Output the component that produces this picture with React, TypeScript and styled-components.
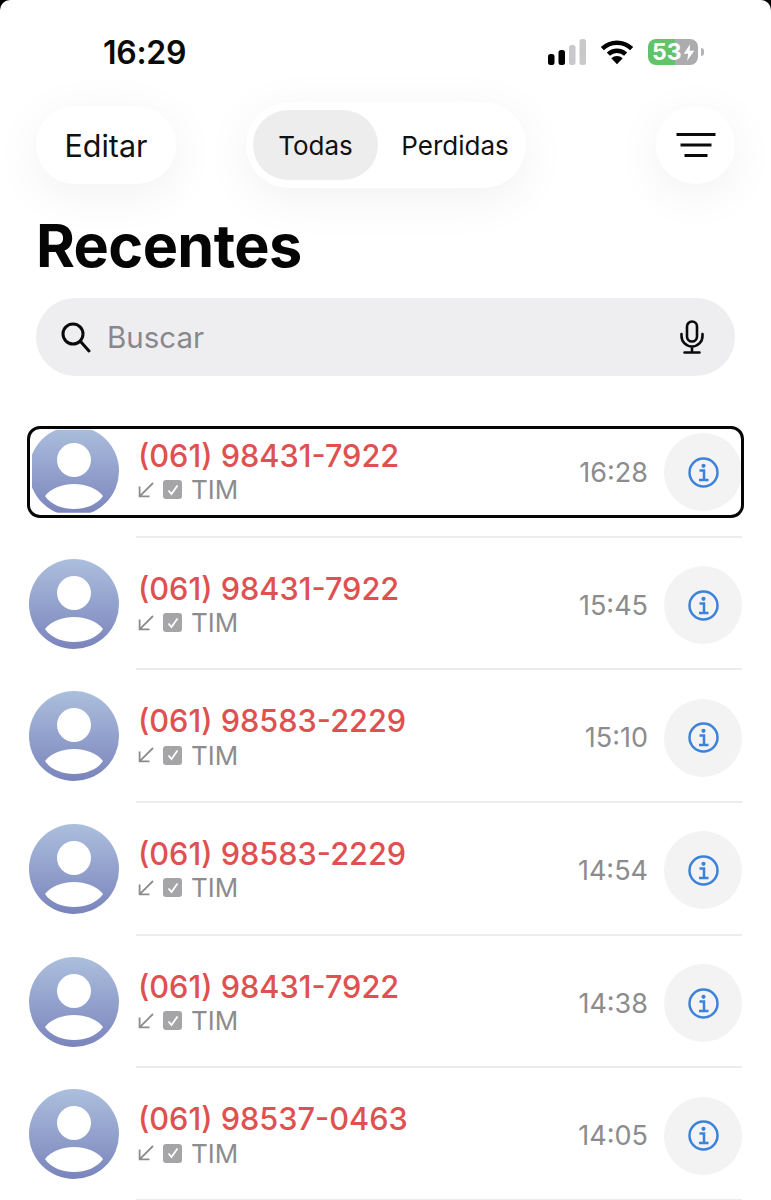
import React from "react";
import styled, { createGlobalStyle } from "styled-components";

const Global = createGlobalStyle`
  html, body { margin: 0; padding: 0; background: #000; }
  body { font-family: Inter, "Liberation Sans", sans-serif; -webkit-font-smoothing: antialiased; }
`;

const Screen = styled.div`
  width: 771px;
  height: 1200px;
  overflow: hidden;
  background: #fff;
  border-radius: 10px 10px 0 0;
`;

const StatusBar = styled.div`
  height: 102px;
  display: flex;
  align-items: flex-start;
  justify-content: space-between;
  padding: 34px 67px 0 103px;
  box-sizing: border-box;
`;

const Clock = styled.div`
  font-size: 32px;
  line-height: 37px;
  font-weight: 600;
  color: #0a0a0a;
  letter-spacing: -0.3px;
`;

const StatusIcons = styled.div`
  display: flex;
  align-items: flex-end;
  margin-top: 5px;
  height: 26px;
  gap: 14px;
`;

const Battery = styled.div`
  position: relative;
  width: 50px;
  height: 26px;
  margin-right: 6px;
  border-radius: 8px;
  background: linear-gradient(90deg, #62c368 0 54%, #acacae 54% 100%);
  color: #fff;
  font-size: 23px;
  line-height: 26px;
  font-weight: 700;
  padding-left: 4px;
  box-sizing: border-box;
  display: flex;
  align-items: center;
  gap: 1px;
  &::after {
    content: "";
    position: absolute;
    right: -6px;
    top: 9px;
    width: 3px;
    height: 8px;
    border-radius: 0 4px 4px 0;
    background: #b4b4b6;
  }
`;

const Toolbar = styled.div`
  display: flex;
  align-items: center;
  height: 86px;
  padding: 0 36px;
`;

const Pill = styled.div`
  width: 140px;
  height: 78px;
  border-radius: 39px;
  background: #fff;
  box-shadow: 0 10px 50px rgba(0, 0, 0, 0.06);
  display: flex;
  align-items: center;
  justify-content: center;
  font-size: 30.5px;
  font-weight: 400;
  color: #111;
`;

const Segment = styled.div`
  width: 280px;
  height: 86px;
  margin-left: 70px;
  box-sizing: border-box;
  padding: 8px 7px;
  border-radius: 43px;
  background: #fff;
  box-shadow: 0 10px 50px rgba(0, 0, 0, 0.06);
  display: flex;
  align-items: center;
`;

const SegmentItem = styled.div<{ $active?: boolean }>`
  width: ${(p) => (p.$active ? "125px" : "141px")};
  height: 70px;
  box-sizing: border-box;
  padding-left: ${(p) => (p.$active ? "0" : "13px")};
  border-radius: 35px;
  background: ${(p) => (p.$active ? "#ededed" : "transparent")};
  display: flex;
  align-items: center;
  justify-content: center;
  font-size: 26px;
  color: #111;
`;

const RoundButton = styled(Pill)`
  width: 79px;
  margin-left: auto;
`;

const Title = styled.h1`
  margin: 19px 0 0 36px;
  height: 78px;
  font-size: 59.3px;
  line-height: 78px;
  font-weight: 700;
  letter-spacing: -0.6px;
  color: #050505;
`;

const SearchBar = styled.div`
  margin: 13px 36px 0;
  height: 78px;
  border-radius: 39px;
  background: #eeeef0;
  display: flex;
  align-items: center;
  padding: 0 31px 0 24px;
  gap: 15px;
`;

const SearchText = styled.span`
  flex: 1;
  font-size: 29.5px;
  color: #88888c;
`;

const List = styled.div`
  margin-top: 29px;
`;

const Row = styled.div`
  position: relative;
  height: 132.7px;
  display: flex;
  align-items: stretch;
  padding: 0 29px;
  gap: 18px;
`;

const FocusRing = styled.div`
  position: absolute;
  left: 27px;
  top: 21px;
  width: 717px;
  height: 92px;
  box-sizing: border-box;
  border: 3px solid #050505;
  border-radius: 13px;
  pointer-events: none;
`;

const AvatarBox = styled.div<{ $clipped?: boolean }>`
  flex: none;
  align-self: center;
  margin-top: -1px;
  width: 90px;
  height: 90px;
  clip-path: ${(p) => (p.$clipped ? "inset(4px 0 3px 3px)" : "none")};
`;

const RowBody = styled.div`
  flex: 1;
  min-width: 0;
  display: flex;
  align-items: center;
  padding-top: 4px;
  border-bottom: 2px solid #ececee;
  box-sizing: border-box;
  margin-left: -1px;
`;

const Details = styled.div`
  flex: 1;
  display: flex;
  flex-direction: column;
  padding-left: 2px;
  margin-top: -1px;
`;

const Phone = styled.div`
  font-size: 30.7px;
  line-height: 36px;
  font-weight: 500;
  color: #df5150;
  letter-spacing: 0;
`;

const SubLine = styled.div`
  display: flex;
  align-items: center;
  height: 32px;
  gap: 9px;
  color: #8c8c8e;
  font-size: 26px;
`;

const SimBadge = styled.span`
  width: 19px;
  height: 19px;
  border-radius: 3px;
  background: #a5a5a7;
  display: flex;
  align-items: center;
  justify-content: center;
`;

const Time = styled.div`
  font-size: 27px;
  color: #8c8c8e;
  margin-right: 16px;
`;

const InfoButton = styled.div`
  flex: none;
  width: 78px;
  height: 78px;
  border-radius: 50%;
  background: #f3f3f4;
  display: flex;
  align-items: center;
  justify-content: center;
`;

const Signal = () => (
  <svg width="38" height="26" viewBox="0 0 38 26">
    <rect x="0" y="15" width="6.5" height="11" rx="2.5" fill="#000" />
    <rect x="10.5" y="11" width="6.5" height="15" rx="2.5" fill="#000" />
    <rect x="21" y="6" width="6.5" height="20" rx="2.5" fill="#c9c9cb" />
    <rect x="31.5" y="0" width="6.5" height="26" rx="2.5" fill="#c9c9cb" />
  </svg>
);

const Wifi = () => (
  <svg width="34" height="26" viewBox="0 0 35 26" fill="none" stroke="#000" strokeWidth="4.6">
    <path d="M2.4 9.6A21.5 21.5 0 0 1 32.6 9.6" />
    <path d="M8.6 15.2A13 13 0 0 1 26.4 15.2" />
    <path d="M17.5 25.5L11.6 19.4A9 9 0 0 1 23.4 19.4Z" fill="#000" stroke="none" />
  </svg>
);

const Bolt = () => (
  <svg width="12" height="17" viewBox="0 0 16 22" fill="#fff">
    <path d="M9.5 0L1 12.5H7L5.5 22L15 8.5H8.8Z" />
  </svg>
);

const Lines = () => (
  <svg width="40" height="24" viewBox="0 0 40 24" fill="none" stroke="#0a0a0a" strokeWidth="3">
    <path d="M0.5 1.5H39.5M4.5 12H35.5M8.5 22.5H31.5" />
  </svg>
);

const SearchIcon = () => (
  <svg width="32" height="32" viewBox="0 0 32 32" fill="none" stroke="#0a0a0a" strokeWidth="3" strokeLinecap="round">
    <circle cx="13" cy="13" r="10" />
    <path d="M21 21L29 30" />
  </svg>
);

const MicIcon = () => (
  <svg width="24" height="34" viewBox="0 0 24 34" fill="none" stroke="#0a0a0a" strokeWidth="2.6" strokeLinecap="round">
    <rect x="7" y="1.5" width="10" height="20" rx="5" />
    <path d="M1.5 14V16A10.5 10.5 0 0 0 22.5 16V14M12 27V32M4.5 32.5H19.5" />
  </svg>
);

const Avatar = () => (
  <svg width="90" height="90" viewBox="0 0 90 90">
    <defs>
      <linearGradient id="avatarFill" x1="0" y1="0" x2="0" y2="1">
        <stop offset="0" stopColor="#acbfdd" />
        <stop offset="1" stopColor="#7a84bc" />
      </linearGradient>
    </defs>
    <circle cx="45" cy="45" r="45" fill="url(#avatarFill)" />
    <circle cx="45" cy="34" r="17" fill="#fff" />
    <path d="M16 70C22 62 34 58 45 58C56 58 68 62 74 70C68 79 56 83 45 83C34 83 22 79 16 70Z" fill="#fff" />
  </svg>
);

const IncomingIcon = () => (
  <svg width="16" height="16" viewBox="0 0 16 16" fill="none" stroke="#8c8c8e" strokeWidth="1.8">
    <path d="M15 1L1.8 14.2M1.6 4.5V14.4H11.5" />
  </svg>
);

const CheckIcon = () => (
  <svg width="12" height="12" viewBox="0 0 12 12" fill="none" stroke="#fff" strokeWidth="1.8">
    <path d="M1.5 6.5L4.5 10L10.5 1.5" />
  </svg>
);

const InfoIcon = () => (
  <svg width="31" height="31" viewBox="0 0 31 31" fill="none" stroke="#3c82da" strokeWidth="2.5">
    <circle cx="15.5" cy="15.5" r="14" />
    <circle cx="15.5" cy="8.8" r="2.1" fill="#3c82da" stroke="none" />
    <path d="M11.5 13.5H16V22.5M11 23H20.5" />
  </svg>
);

const calls = [
  { phone: "(061) 98431-7922", time: "16:28", focused: true },
  { phone: "(061) 98431-7922", time: "15:45" },
  { phone: "(061) 98583-2229", time: "15:10" },
  { phone: "(061) 98583-2229", time: "14:54" },
  { phone: "(061) 98431-7922", time: "14:38" },
  { phone: "(061) 98537-0463", time: "14:05" },
];

export default function App() {
  return (
    <Screen>
      <Global />
      <StatusBar>
        <Clock>16:29</Clock>
        <StatusIcons>
          <Signal />
          <Wifi />
          <Battery>
            53
            <Bolt />
          </Battery>
        </StatusIcons>
      </StatusBar>
      <Toolbar>
        <Pill>Editar</Pill>
        <Segment>
          <SegmentItem $active>Todas</SegmentItem>
          <SegmentItem>Perdidas</SegmentItem>
        </Segment>
        <RoundButton>
          <Lines />
        </RoundButton>
      </Toolbar>
      <Title>Recentes</Title>
      <SearchBar>
        <SearchIcon />
        <SearchText>Buscar</SearchText>
        <MicIcon />
      </SearchBar>
      <List>
        {calls.map((c, i) => (
          <Row key={i}>
            <AvatarBox $clipped={c.focused}>
              <Avatar />
            </AvatarBox>
            <RowBody>
              <Details>
                <Phone>{c.phone}</Phone>
                <SubLine>
                  <IncomingIcon />
                  <SimBadge>
                    <CheckIcon />
                  </SimBadge>
                  TIM
                </SubLine>
              </Details>
              <Time>{c.time}</Time>
              <InfoButton>
                <InfoIcon />
              </InfoButton>
            </RowBody>
            {c.focused && <FocusRing />}
          </Row>
        ))}
      </List>
    </Screen>
  );
}
